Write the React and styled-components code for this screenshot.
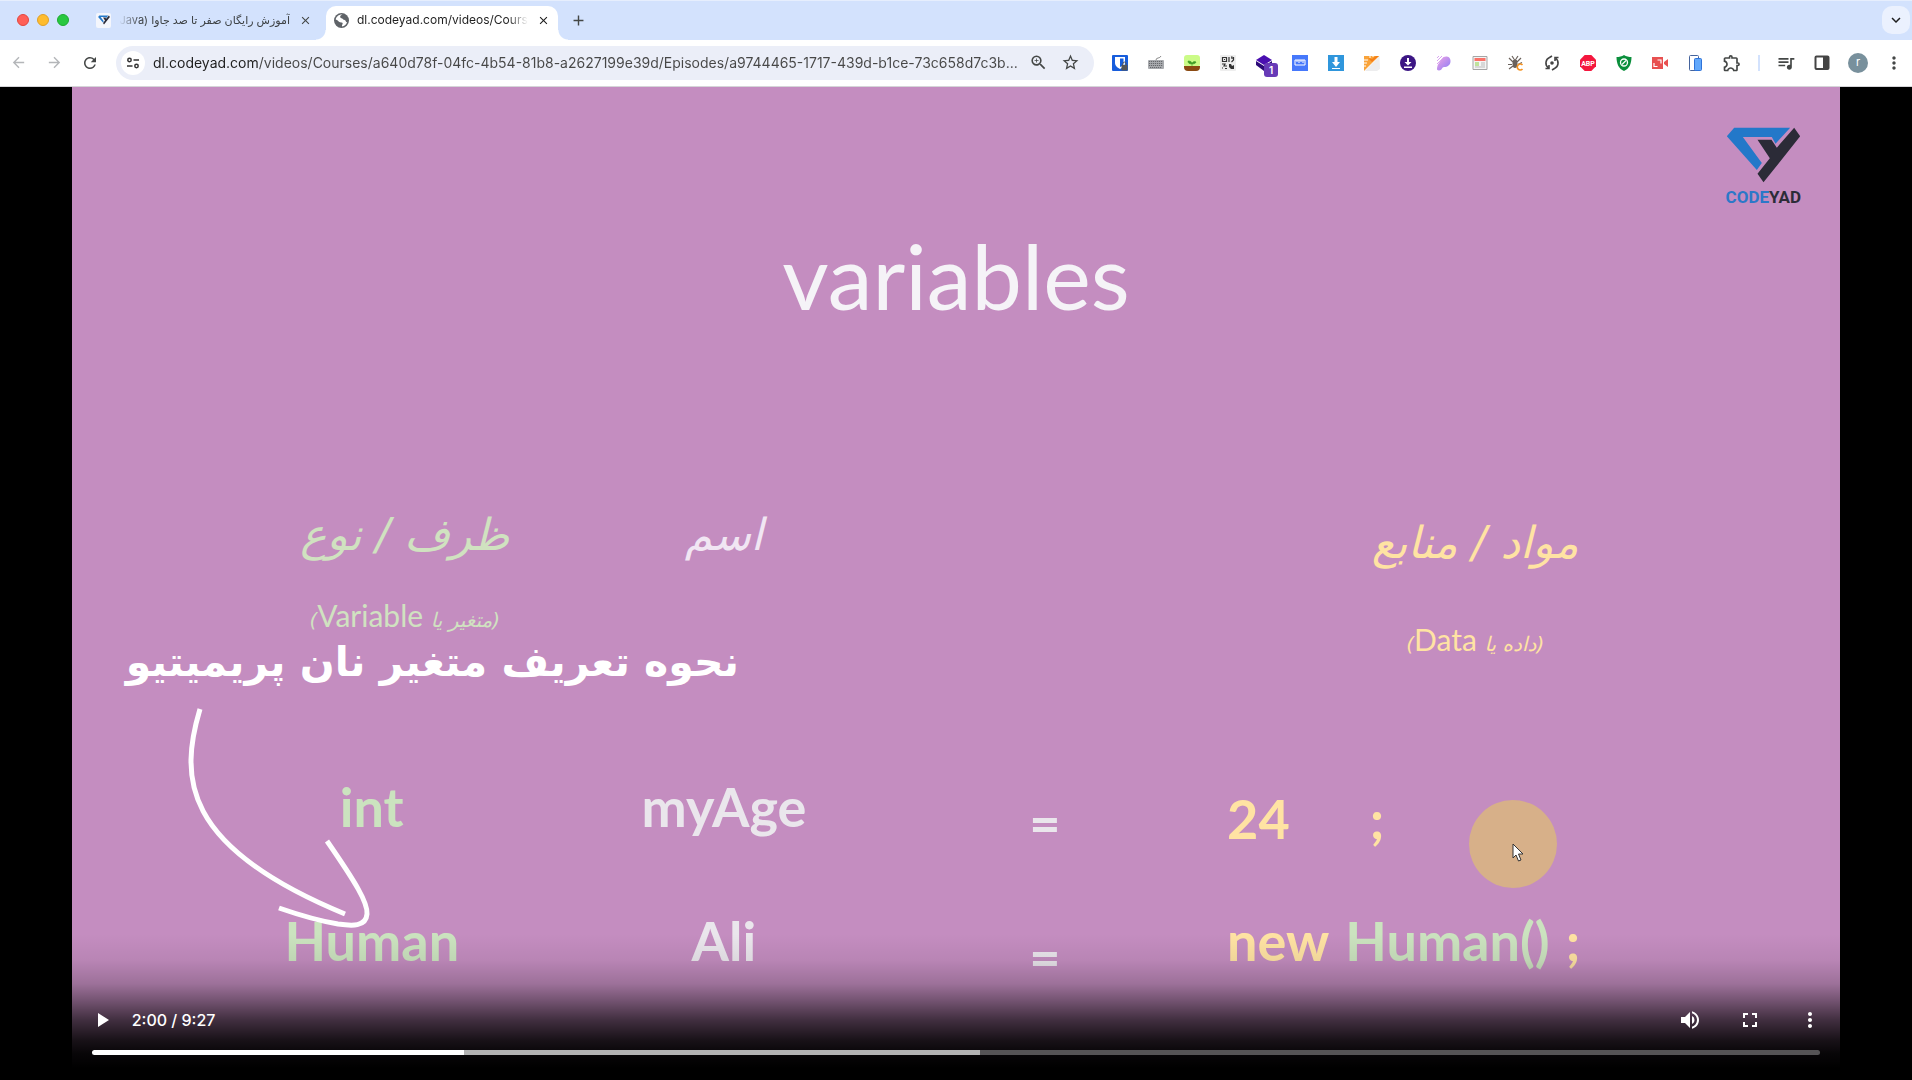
import React from 'react';
import styled, { createGlobalStyle } from 'styled-components';
import {
  MdArrowBack, MdArrowForward, MdRefresh, MdClose, MdAdd, MdZoomIn, MdStarBorder,
  MdOutlineExtension, MdQueueMusic, MdMoreVert, MdPlayArrow, MdVolumeUp,
  MdFullscreen, MdKeyboardArrowDown,
} from 'react-icons/md';

const GlobalStyle = createGlobalStyle`
  * { box-sizing: border-box; }
  body { margin: 0; background: #000; font-family: Inter, "DejaVu Sans", sans-serif; }
  button { border: 0; padding: 0; background: none; color: inherit; font: inherit; }
`;

const Window = styled.div`
  display: flex;
  flex-direction: column;
  height: 100vh;
  overflow: hidden;
`;

/* ---------- tab strip ---------- */

const TabStrip = styled.header`
  display: flex;
  align-items: flex-end;
  flex: none;
  height: 40px;
  padding: 0 2px 0 17px;
  background: #d3e2fd;
  border-top: 1px solid #e6eefd;
`;

const Lights = styled.div`
  display: flex;
  align-items: center;
  gap: 8px;
  height: 34px;
  padding-bottom: 6px;
  margin-right: 17px;
`;

const Light = styled.button`
  width: 12px;
  height: 12px;
  border-radius: 50%;
  background: ${(p) => p.$fill};
  border: 1px solid ${(p) => p.$edge};
`;

const Tab = styled.div`
  position: relative;
  display: flex;
  align-items: center;
  gap: 8px;
  width: ${(p) => (p.$active ? 232 : 240)}px;
  height: 34px;
  padding: ${(p) => (p.$active ? '0 8px 6px' : '0 14px 6px 10px')};
  border-radius: 10px 10px 0 0;
  background: ${(p) => (p.$active ? '#fff' : 'transparent')};
  color: ${(p) => (p.$active ? '#1f1f1f' : '#3c4043')};

  &::before, &::after {
    content: '';
    display: ${(p) => (p.$active ? 'block' : 'none')};
    position: absolute;
    bottom: 0;
    width: 10px;
    height: 10px;
  }
  &::before { left: -10px; background: radial-gradient(circle at 0 0, transparent 9px, #fff 10px); }
  &::after { right: -10px; background: radial-gradient(circle at 100% 0, transparent 9px, #fff 10px); }
`;

const TabTitle = styled.span`
  flex: 1;
  min-width: 0;
  overflow: hidden;
  white-space: nowrap;
  font-size: ${(p) => (p.dir === 'rtl' ? 11 : 12)}px;
  line-height: 20px;
  mask-image: linear-gradient(${(p) => (p.dir === 'rtl' ? 'to left' : 'to right')}, #000 88%, transparent);
`;

const TabIcon = styled.span`
  display: flex;
  flex: none;
  width: 15px;
  height: 15px;
  align-items: center;
  justify-content: center;
  background: ${(p) => p.$fill || 'transparent'};
  border-radius: 2px;
`;

const IconButton = styled.button`
  display: flex;
  flex: none;
  align-items: center;
  justify-content: center;
  width: ${(p) => p.$size || 28}px;
  height: ${(p) => p.$size || 28}px;
  border-radius: 10px;
  color: ${(p) => p.$color || '#444746'};
  background: ${(p) => p.$fill || 'transparent'};
`;

const StripButton = styled(IconButton)`
  height: 28px;
  margin-bottom: 6px;
`;

const Spacer = styled.div`
  flex: 1;
`;

/* ---------- toolbar ---------- */

const Toolbar = styled.nav`
  display: flex;
  align-items: center;
  flex: none;
  height: 47px;
  padding: 0 0 1px;
  background: #fff;
  border-bottom: 1px solid #d5d5d8;
`;

const NavGroup = styled.div`
  display: flex;
  width: 116px;
`;

const AddressBar = styled.form`
  display: flex;
  flex: 1;
  align-items: center;
  height: 34px;
  min-width: 0;
  padding: 0 8px 0 5px;
  border-radius: 17px;
  background: #ebeef8;
`;

const SiteButton = styled(IconButton)`
  border-radius: 50%;
`;

const Url = styled.input`
  flex: 1;
  min-width: 0;
  margin: 0 0 0 8px;
  padding: 0;
  border: 0;
  outline: 0;
  font: 14px/20px Inter, sans-serif;
  color: transparent;
  background: linear-gradient(90deg, #1f1f1f 105px, #474747 105px);
  background-clip: text;
  text-overflow: ellipsis;
`;

const Extensions = styled.div`
  display: flex;
  flex: none;
  margin-left: 8px;
`;

const Extension = styled(IconButton)`
  position: relative;
  width: 36px;
  height: 36px;
`;

const Badge = styled.span`
  position: absolute;
  left: 18px;
  top: 18px;
  width: 14px;
  height: 14px;
  border-radius: 3px;
  background: #673ab7;
  color: #fff;
  font-size: 10px;
  font-weight: 600;
  line-height: 14px;
  text-align: center;
`;

const Divider = styled.span`
  width: 2px;
  height: 16px;
  margin: 10px 8px;
  background: #d3e2fd;
`;

const Avatar = styled.span`
  width: 20px;
  height: 20px;
  border-radius: 50%;
  background: #78909c;
  color: #fff;
  font-size: 11px;
  line-height: 19px;
  text-align: center;
`;

/* ---------- video ---------- */

const Stage = styled.main`
  display: flex;
  justify-content: center;
  flex: 1;
  min-height: 0;
  background: #000;
`;

const Video = styled.section`
  position: relative;
  width: 92.5%;
  height: 100%;
  overflow: hidden;
  background: #c48dc0;
`;

const Slide = styled.div`
  padding: 128px 106px 0 98px;
  font-family: Lato, "DejaVu Sans", sans-serif;
`;

const Title = styled.h1`
  margin: 0 0 160px;
  padding-left: 8px;
  text-align: center;
  font-size: 90px;
  font-weight: 400;
  line-height: 120px;
  color: #f5f3f7;
`;

const Columns = styled.div`
  display: grid;
  grid-template-columns: 404fr 300fr 342fr 518fr;
`;

const Heads = styled(Columns)`
  height: 280px;
`;

const Head = styled.div`
  display: flex;
  flex-direction: column;
  align-items: center;
  gap: ${(p) => p.$gap || 0}px;
  padding: ${(p) => p.$top || 0}px 0 0 ${(p) => p.$left || 0}px;
  color: ${(p) => p.$color};
`;

const HeadTitle = styled.h2`
  margin: 0;
  font: italic 400 44px/80px "DejaVu Sans", sans-serif;
  white-space: nowrap;
`;

const HeadNote = styled.p`
  margin: 0;
  font-size: 30px;
  line-height: 40px;
  white-space: nowrap;
`;

const Persian = styled.span`
  font: italic 20px/40px "DejaVu Sans", sans-serif;
`;

const Code = styled(Columns)`
  height: 134px;
  font-size: 54px;
  font-weight: 700;
  line-height: 64px;
`;

const Cell = styled.div`
  padding-top: ${(p) => p.$top || 0}px;
  text-align: center;
  color: ${(p) => p.$color};
`;

const Value = styled(Cell)`
  display: flex;
  gap: ${(p) => p.$gap}px;
  padding-left: 11px;
  white-space: pre;
`;

const Green = styled.span`
  color: #cbe3bf;
`;

const Logo = styled.div`
  position: absolute;
  top: 40px;
  right: 38px;
  display: flex;
  flex-direction: column;
  align-items: center;
  gap: 4px;
  width: 78px;
  font: 700 17px/20px Roboto, sans-serif;
  color: #2c2c38;
`;

const Blue = styled.span`
  color: #2b78c8;
`;

const Caption = styled.p`
  position: absolute;
  left: 54px;
  top: 540px;
  margin: 0;
  font: 700 41px/70px "DejaVu Sans", sans-serif;
  color: #fff;
  white-space: nowrap;
`;

const Arrow = styled.svg`
  position: absolute;
  left: 108px;
  top: 614px;
`;

const Pointer = styled.div`
  position: absolute;
  left: 1397px;
  top: 713px;
  width: 88px;
  height: 88px;
  padding: 43px 0 0 43px;
  border-radius: 50%;
  background: #d7b089;
`;

const Controls = styled.div`
  position: absolute;
  inset: auto 0 0;
  height: 146px;
  padding-top: 66px;
  color: #fff;
  background: linear-gradient(
    rgba(0, 0, 0, 0) 0,
    rgba(0, 0, 0, 0.06) 18%,
    rgba(0, 0, 0, 0.2) 34%,
    rgba(0, 0, 0, 0.4) 45%,
    rgba(0, 0, 0, 0.67) 59%,
    rgba(0, 0, 0, 0.88) 73%,
    rgba(0, 0, 0, 0.96) 82%,
    #000 92%
  );
`;

const ControlRow = styled.div`
  display: flex;
  align-items: center;
  height: 40px;
  padding: 0 18px;
`;

const Time = styled.span`
  margin-left: 18px;
  font: 500 16px/20px Inter, sans-serif;
`;

const MediaButton = styled(IconButton)`
  width: 24px;
  height: 40px;
  margin-left: ${(p) => p.$gap || 0}px;
`;

const Progress = styled.input`
  display: block;
  width: calc(100% - 40px);
  height: 5px;
  margin: 10px 20px 0;
  border-radius: 3px;
  appearance: none;
  background: linear-gradient(90deg, #fff 21.5%, #b3b3b3 21.5% 51.4%, #565456 51.4%);
  &::-webkit-slider-thumb { appearance: none; width: 0; height: 0; }
`;

/* ---------- drawings ---------- */

const Mark = ({ width, height }) => (
  <svg width={width} height={height} viewBox="138 82 224 168">
    <path fill="#2378c9" d="M162 84h168l-44 48-11-20h-87l57 78-15 21-90-101z" />
    <path fill="#2b2b37" d="m342 84 18 26-110 138-18-26 37-46-37-56h42l16 24z" />
  </svg>
);

const Globe = () => (
  <svg width="15" height="15" viewBox="0 0 15 15">
    <circle cx="7.500" cy="7.500" r="7.500" fill="#5f6368" />
    <path fill="#fff" d="M8.500 1.600C7 2 6 3 6.200 4.200 6.300 5.200 8.500 5 8.800 6c.3 1.200 1.700.5 2.600 1.400.6.700.4 2 1.600 1.600C12.500 11.500 10.500 13.300 8 13.400v-1.500c1-.4.9-1.800 0-2.300-1.200-.6-2.500-.2-3.300-1.200C3.900 7.500 3 7 1.700 6.600 2.200 3.600 5 1.300 8.500 1.600z" />
    <path fill="#5f6368" d="M9.500 2h2L13 4.500 11 6 9.500 4.500z" />
  </svg>
);

const Svg = ({ children }) => (
  <svg width="16" height="16" viewBox="0 0 16 16" fill="none">{children}</svg>
);

const extensions = [
  ['Bitwarden', <Svg><rect width="16" height="16" rx="1" fill="#175ddc" /><path d="M3 2h10v6c0 3-3 5-5 6-2-1-5-3-5-6z" fill="#fff" /><path d="M8 3.500h3.500V8c0 2-2 3.500-3.500 4z" fill="#175ddc" /><path d="M9.500 10h6v5.500h-6z" fill="#555" /><path d="M10.800 10V8.800a1.700 1.700 0 0 1 3.400 0V10" stroke="#555" /></Svg>],
  ['Keyboard', <Svg><path d="M8 5c0-3 4-1 5-4" stroke="#888" /><rect y="5" width="16" height="9" rx="1" fill="#a9abaf" /><path d="M1 6.500h14M1 8.500h14M1 10.500h14M2 12.500h12" stroke="#66686c" strokeDasharray="1.200 .8" /></Svg>],
  ['Plant', <Svg><rect width="16" height="12" rx="3" fill="#cbfb87" /><path d="M0 11h16v1a4 4 0 0 1-4 4H4a4 4 0 0 1-4-4z" fill="#8b4a12" /><path d="M8 11V8M8 9C5 9 4 8 4 6c3 0 4 1 4 3 0-2 2-3 4-2 0 1-2 2-4 2" fill="#3d9a24" stroke="#3d9a24" strokeWidth=".6" /></Svg>],
  ['QR code', <Svg><rect width="16" height="16" rx="1" fill="#eee" /><path d="M2.500 2.500h4v4h-4zM9 2v5M11 2h1v2M13.500 2v3l-2 2M2 9h3l-1 2h3M2 13h1M5 13.500h2" stroke="#333" strokeWidth="1.200" /><path d="M4 4h1v1H4zM9 9h2l1 2 2-1v4h-3l-2-2z" fill="#333" /></Svg>],
  ['Layers', <><Svg><path d="m8 0 8 5-8 5-8-5z" fill="#4a0fb0" /><path d="m0 6 8 5 8-5v4l-8 6-8-6z" fill="#2c0a78" /></Svg><Badge>1</Badge></>],
  ['Ruler', <Svg><path fill="#4678fb" d="M0 0h16v16H0z" /><path d="M3 5h10v5H3zM5 5v2M7 5v3M9 5v2M11 5v3" stroke="#fff" /></Svg>],
  ['Downloader', <Svg><path fill="#2f96dc" d="M0 0h16v16H0z" /><path fill="#fff" d="M6.500 2h3v5H12l-4 5-4-5h2.500zM4 13h8v1H4z" /></Svg>],
  ['Notes', <Svg><path fill="#ededee" d="m15.500 1 .5 13-3 2H1z" /><path fill="#f9a33a" d="M0 1h15L0 16z" /><path fill="#f57f17" d="m4 3 4 4 7-6h-3L8 4z" /><path stroke="#fff" d="M0 5h4M0 8h3M0 11h2M6 0v3M9 0v2" /></Svg>],
  ['Saver', <Svg><circle cx="8" cy="8" r="8" fill="#3c1684" /><path fill="#fff" d="M7 3h2v4h2.500L8 10.500 4.500 7H7zM4 11.500h8V13H4z" /></Svg>],
  ['Paint', <Svg><defs><linearGradient id="paint" x2="1" y2="1"><stop stopColor="#f2a5e3" /><stop offset="1" stopColor="#8a7bf7" /></linearGradient></defs><path d="M6 3.500C8 .5 14.500.5 14.500 6c0 4-3 6-6.500 6-2 0-2 3.500-5 3.500-3 0-2-3-1-6z" fill="url(#paint)" /><path d="m1 3 2-2M1 6l5-5M1 9l7-7" stroke="#d9a3f0" /></Svg>],
  ['Reader', <Svg><path d="M1 1.500h14v13H1z" fill="#f4f4f4" stroke="#a5a5a5" /><path fill="#fa7268" d="M2.500 3h11v3h-11z" /><path stroke="#8bd044" d="M3 8h4M3 10h4" /><path stroke="#bbb" d="M9 8h4M9 10h4M3 12h10" /></Svg>],
  ['Bug', <Svg><ellipse cx="7" cy="8.500" rx="2.500" ry="4.500" fill="#6b625c" /><path d="m1 3 4 4M13 3 9 7M0 9.500h4M10 9.500l4-2M1 14l4-3M4 1l2 3M10 1 8 4" stroke="#6b625c" strokeWidth="1.200" /><path d="M14.500 10a3 3 0 1 0 0 4" stroke="#f59322" strokeWidth="1.600" /></Svg>],
  ['Sync', <Svg><path d="M5.500 2.500a6 6 0 0 0-1.500 10M10.500 13.500a6 6 0 0 0 1.500-10M1.500 13.500H5V10M14.500 2.500H11V6M5.500 2.500 8 1M10.500 13.500 8 15" stroke="#444" strokeWidth="1.600" /><circle cx="8" cy="8" r="1.800" fill="#444" /></Svg>],
  ['Adblock Plus', <Svg><path fill="#f4173e" d="M4.700 0h6.600L16 4.700v6.600L11.300 16H4.700L0 11.300V4.700z" /><text x="8" y="10.500" textAnchor="middle" fill="#fff" fontSize="7" fontWeight="700" fontFamily="Roboto, sans-serif">ABP</text></Svg>],
  ['Shield', <Svg><path fill="#0b8f3c" d="M8 0c2 1.500 5 2 7.500 2C15.500 9 13 14 8 16 3 14 .5 9 .5 2 3 2 6 1.500 8 0z" /><circle cx="8" cy="7.500" r="3.500" stroke="#fff" strokeWidth="1.300" /><path d="m6 9.500 4-4" stroke="#fff" strokeWidth="1.300" /></Svg>],
  ['Recorder', <Svg><path fill="#e85050" d="M0 2h11v12H0zM12 7l4-3v8l-4-3z" /><path d="M5.500 5H9v3.500M2 8v3.500h3.500" stroke="#fff" strokeWidth="1.200" /></Svg>],
  ['Devices', <Svg><rect x="1.500" y=".5" width="9" height="15" rx="1" stroke="#45639c" /><rect x="6.500" y="3.500" width="7" height="12" rx="1" fill="#62a8fb" stroke="#2f73d8" /></Svg>],
];

const GREEN = '#cbe3bf';
const PALE = '#eae6ec';
const YELLOW = '#ffe3a3';

export default function App() {
  return (
    <Window>
      <GlobalStyle />
      <TabStrip>
        <Lights>
          <Light aria-label="Close window" $fill="#ff5f57" $edge="#e2463f" />
          <Light aria-label="Minimize window" $fill="#febc2e" $edge="#e0a028" />
          <Light aria-label="Zoom window" $fill="#28c840" $edge="#1fab30" />
        </Lights>
        <Tab>
          <TabIcon $fill="#f4f6fc"><Mark width={12} height={10} /></TabIcon>
          <TabTitle dir="rtl">آموزش رایگان صفر تا صد جاوا (Java)</TabTitle>
          <IconButton $size={14} aria-label="Close tab"><MdClose size={13} /></IconButton>
        </Tab>
        <Tab $active>
          <TabIcon><Globe /></TabIcon>
          <TabTitle>dl.codeyad.com/videos/Courses/a640d78f</TabTitle>
          <IconButton $size={14} $color="#1f1f1f" aria-label="Close tab"><MdClose size={13} /></IconButton>
        </Tab>
        <StripButton $size={40} aria-label="New tab"><MdAdd size={17} /></StripButton>
        <Spacer />
        <StripButton $fill="#ebf1fe" $color="#1f1f1f" aria-label="Search tabs">
          <MdKeyboardArrowDown size={18} />
        </StripButton>
      </TabStrip>

      <Toolbar>
        <NavGroup>
          <IconButton $size={36} $color="#b4b6b9" aria-label="Back"><MdArrowBack size={17} /></IconButton>
          <IconButton $size={36} $color="#b4b6b9" aria-label="Forward"><MdArrowForward size={17} /></IconButton>
          <IconButton $size={36} aria-label="Reload"><MdRefresh size={18} /></IconButton>
        </NavGroup>
        <AddressBar>
          <SiteButton type="button" $size={24} $fill="#fff" aria-label="Site information">
            <svg width="14" height="14" viewBox="0 0 14 14" fill="none" stroke="#333" strokeWidth="1.500">
              <circle cx="3.500" cy="4" r="1.700" /><path d="M7.500 4H13M1 10h5.500" /><circle cx="10.500" cy="10" r="1.700" />
            </svg>
          </SiteButton>
          <Url
            aria-label="Address"
            readOnly
            value="dl.codeyad.com/videos/Courses/a640d78f-04fc-4b54-81b8-a2627199e39d/Episodes/a9744465-1717-439d-b1ce-73c658d7c3b..."
          />
          <IconButton type="button" $size={32} aria-label="Zoom level"><MdZoomIn size={19} /></IconButton>
          <IconButton type="button" $size={32} aria-label="Bookmark"><MdStarBorder size={19} /></IconButton>
        </AddressBar>
        <Extensions>
          {extensions.map(([name, icon]) => (
            <Extension key={name} aria-label={name}>{icon}</Extension>
          ))}
          <Extension aria-label="Extensions"><MdOutlineExtension size={20} /></Extension>
          <Divider />
          <Extension aria-label="Media"><MdQueueMusic size={20} /></Extension>
          <Extension aria-label="Side panel">
            <svg width="16" height="16" viewBox="0 0 16 16">
              <rect x="1.500" y="1.500" width="13" height="12.500" rx="1" fill="none" stroke="#444" strokeWidth="2" />
              <path fill="#444" d="M9 1h6v13H9z" />
            </svg>
          </Extension>
          <Extension aria-label="Profile"><Avatar>r</Avatar></Extension>
          <Extension aria-label="Menu"><MdMoreVert size={20} /></Extension>
        </Extensions>
      </Toolbar>

      <Stage>
        <Video>
          <Slide>
            <Title>variables</Title>
            <Heads>
              <Head $color="#d0e2c0" $left={66} $gap={20}>
                <HeadTitle dir="rtl">ظرف / نوع</HeadTitle>
                <HeadNote dir="rtl"><Persian>(متغیر یا</Persian> Variable<Persian>)</Persian></HeadNote>
              </Head>
              <Head $color="#f1e6f3"><HeadTitle dir="rtl">اسم</HeadTitle></Head>
              <div />
              <Head $color={YELLOW} $top={8} $gap={36}>
                <HeadTitle dir="rtl">مواد / منابع</HeadTitle>
                <HeadNote dir="rtl"><Persian>(داده یا</Persian> Data<Persian>)</Persian></HeadNote>
              </Head>
            </Heads>
            <Code>
              <Cell $color={GREEN}>int</Cell>
              <Cell $color={PALE}>myAge</Cell>
              <Cell $color={PALE} $top={16}>=</Cell>
              <Value $color={YELLOW} $top={12} $gap={80}><span>24</span><span>;</span></Value>
            </Code>
            <Code>
              <Cell $color={GREEN}>Human</Cell>
              <Cell $color={PALE}>Ali</Cell>
              <Cell $color={PALE} $top={16}>=</Cell>
              <Value $color={YELLOW} $gap={16}><span>new</span><Green>Human()</Green><span>;</span></Value>
            </Code>
          </Slide>

          <Logo>
            <Mark width={75} height={56} />
            <span><Blue>CODE</Blue>YAD</span>
          </Logo>

          <Caption dir="rtl">نحوه تعریف متغیر نان پریمیتیو</Caption>
          <Arrow width="200" height="240" viewBox="180 700 200 240" fill="none" stroke="#fff" strokeWidth="5">
            <path d="M200 708C180 775 180 845 345 913" />
            <path d="M327 840C356 882 368 902 367 913C366 926 352 925 338 923C320 920 302 915 279 907" />
          </Arrow>
          <Pointer>
            <svg width="13" height="20" viewBox="0 0 13 20">
              <path d="M1 1v14l3-3 2.500 6 2.500-1-2.500-6H11z" fill="#fff" stroke="#333" />
            </svg>
          </Pointer>

          <Controls>
            <ControlRow>
              <MediaButton $color="#fff" aria-label="Play"><MdPlayArrow size={26} /></MediaButton>
              <Time>2:00 / 9:27</Time>
              <Spacer />
              <MediaButton $color="#fff" aria-label="Mute"><MdVolumeUp size={26} /></MediaButton>
              <MediaButton $color="#fff" $gap={36} aria-label="Full screen"><MdFullscreen size={26} /></MediaButton>
              <MediaButton $color="#fff" $gap={36} aria-label="More options"><MdMoreVert size={26} /></MediaButton>
            </ControlRow>
            <Progress type="range" aria-label="Seek" min="0" max="567" defaultValue="120" />
          </Controls>
        </Video>
      </Stage>
    </Window>
  );
}
